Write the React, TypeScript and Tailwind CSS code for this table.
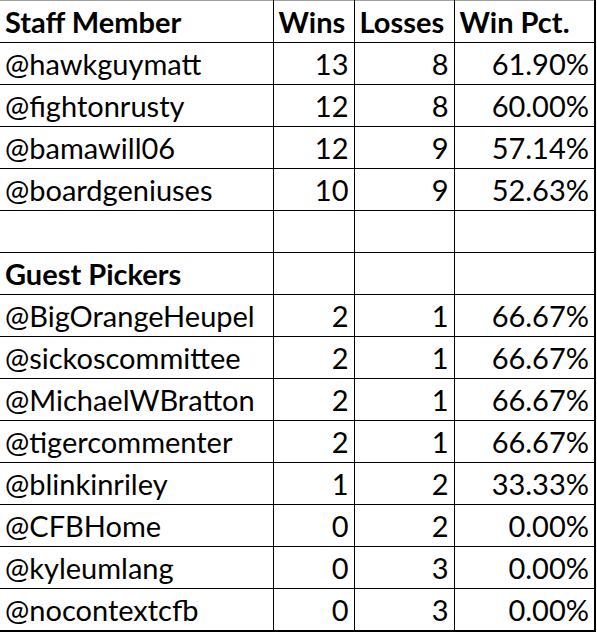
const staff = [
  ["@hawkguymatt", "13", "8", "61.90%"],
  ["@fightonrusty", "12", "8", "60.00%"],
  ["@bamawill06", "12", "9", "57.14%"],
  ["@boardgeniuses", "10", "9", "52.63%"],
];

const guests = [
  ["@BigOrangeHeupel", "2", "1", "66.67%"],
  ["@sickoscommittee", "2", "1", "66.67%"],
  ["@MichaelWBratton", "2", "1", "66.67%"],
  ["@tigercommenter", "2", "1", "66.67%"],
  ["@blinkinriley", "1", "2", "33.33%"],
  ["@CFBHome", "0", "2", "0.00%"],
  ["@kyleumlang", "0", "3", "0.00%"],
  ["@nocontextcfb", "0", "3", "0.00%"],
];

const cell = "h-[42px] border-b border-black px-[5px] align-middle leading-none whitespace-nowrap";

const Row: React.FC<{ r: string[]; bold?: boolean; last?: boolean }> = ({ r, bold, last }) => {
  const align = bold ? " text-left" : " text-right";
  const b = last ? " border-b-2" : "";
  return (
    <tr className={bold ? "font-bold" : ""}>
      <td className={cell + " text-left" + b}>{r[0]}</td>
      <td className={cell + " border-l px-[3px]" + align + b}>{r[1]}</td>
      <td className={cell + " border-l px-[3px]" + align + b}>{r[2]}</td>
      <td className={cell + " border-l border-r-2 px-[3px]" + align + b}>{r[3]}</td>
    </tr>
  );
};

export default function App() {
  return (
    <div className="h-[633px] w-[597px] bg-white">
      <table
        className="w-[595px] table-fixed border-collapse border-t border-t-[#a0a0a0] text-[29px] text-black"
        style={{ fontFamily: "Lato, 'Open Sans', sans-serif" }}
      >
        <colgroup>
          <col className="w-[273px]" />
          <col className="w-[81px]" />
          <col className="w-[100px]" />
          <col className="w-[141px]" />
        </colgroup>
        <tbody>
          <Row r={["Staff Member", "Wins", "Losses", "Win Pct."]} bold />
          {staff.map((r) => (
            <Row key={r[0]} r={r} />
          ))}
          <Row r={["", "", "", ""]} />
          <Row r={["Guest Pickers", "", "", ""]} bold />
          {guests.map((r, i) => (
            <Row key={r[0]} r={r} last={i === guests.length - 1} />
          ))}
        </tbody>
      </table>
    </div>
  );
}
